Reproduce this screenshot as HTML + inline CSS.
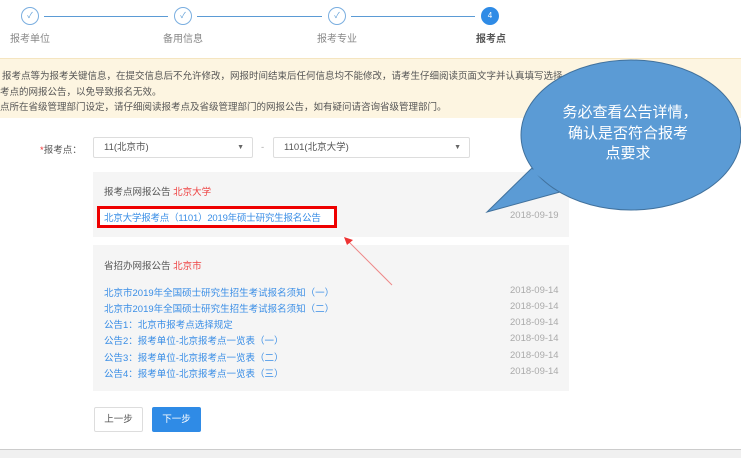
<!DOCTYPE html>
<html><head><meta charset="utf-8"><style>
*{margin:0;padding:0;box-sizing:border-box}
body{width:741px;height:458px;overflow:hidden;background:#fff;font-family:"Liberation Sans","Noto Sans CJK SC",sans-serif;font-size:9.5px;color:#555;position:relative}
.a{position:absolute;white-space:nowrap}
.c{position:absolute;width:18px;height:18px;border-radius:50%;border:1px solid #7aaee0;background:#fff;color:#5b9bd5;font-size:8px;text-align:center;line-height:16px}
.ln{position:absolute;height:1px;background:#5b9bd5;top:16px}
.lbl{position:absolute;top:30px;font-size:10px;color:#888}
.bx{position:absolute;background:#f5f5f5}
.lk{color:#3a8ee6}
.dt{position:absolute;left:510px;color:#aaa}
.sel{position:absolute;top:137px;height:21px;border:1px solid #ddd;border-radius:2px;padding-left:10px;line-height:19px;color:#555}
.sel i{position:absolute;right:8px;font-style:normal;font-size:7px;color:#666}
</style></head><body>
<div class="c" style="left:21px;top:7px">✓</div>
<div class="c" style="left:174px;top:7px">✓</div>
<div class="c" style="left:328px;top:7px">✓</div>
<div class="c" style="left:481px;top:7px;background:#2f8be6;border-color:#2f8be6;color:#fff">4</div>
<div class="ln" style="left:44px;width:124px"></div>
<div class="ln" style="left:197px;width:125px"></div>
<div class="ln" style="left:351px;width:124px"></div>
<div class="lbl" style="left:10px">报考单位</div>
<div class="lbl" style="left:163px">备用信息</div>
<div class="lbl" style="left:317px">报考专业</div>
<div class="lbl" style="left:476px;color:#555;font-weight:bold">报考点</div>
<div class="a" style="left:0;top:58px;width:741px;height:60px;background:#fdf5e1;border-top:1px solid #f5e5c0"></div>
<div class="a" style="left:2px;top:68px">报考点等为报考关键信息，在提交信息后不允许修改，网报时间结束后任何信息均不能修改，请考生仔细阅读页面文字并认真填写选择</div>
<div class="a" style="left:0;top:84px">考点的网报公告，以免导致报名无效。</div>
<div class="a" style="left:0;top:99px">点所在省级管理部门设定，请仔细阅读报考点及省级管理部门的网报公告，如有疑问请咨询省级管理部门。</div>
<div class="a" style="left:40px;top:142px"><span style="color:#e33">*</span>报考点：</div>
<div class="sel" style="left:93px;width:160px">11(北京市)<i style="top:0">▼</i></div>
<div class="a" style="left:261px;top:142px;color:#aaa">-</div>
<div class="sel" style="left:273px;width:197px">1101(北京大学)<i>▼</i></div>
<div class="bx" style="left:93px;top:172px;width:476px;height:65px"></div>
<div class="a" style="left:104px;top:184px">报考点网报公告 <span style="color:#e44">北京大学</span></div>
<div class="a" style="left:97px;top:206px;width:240px;height:22px;border:3px solid #e00;background:#fff"></div>
<div class="a lk" style="left:104px;top:210px;letter-spacing:-0.2px">北京大学报考点（1101）2019年硕士研究生报名公告</div>
<div class="dt" style="top:210px">2018-09-19</div>
<div class="bx" style="left:93px;top:245px;width:476px;height:146px"></div>
<div class="a" style="left:104px;top:258px">省招办网报公告 <span style="color:#e44">北京市</span></div>
<div class="a lk" style="left:104px;top:285px">北京市2019年全国硕士研究生招生考试报名须知（一）</div><div class="dt" style="top:285px">2018-09-14</div>
<div class="a lk" style="left:104px;top:301px">北京市2019年全国硕士研究生招生考试报名须知（二）</div><div class="dt" style="top:301px">2018-09-14</div>
<div class="a lk" style="left:104px;top:317px">公告1：北京市报考点选择规定</div><div class="dt" style="top:317px">2018-09-14</div>
<div class="a lk" style="left:104px;top:333px">公告2：报考单位-北京报考点一览表（一）</div><div class="dt" style="top:333px">2018-09-14</div>
<div class="a lk" style="left:104px;top:350px">公告3：报考单位-北京报考点一览表（二）</div><div class="dt" style="top:350px">2018-09-14</div>
<div class="a lk" style="left:104px;top:366px">公告4：报考单位-北京报考点一览表（三）</div><div class="dt" style="top:366px">2018-09-14</div>
<div class="a" style="left:94px;top:407px;width:49px;height:25px;border:1px solid #ddd;border-radius:2px;text-align:center;line-height:23px">上一步</div>
<div class="a" style="left:152px;top:407px;width:49px;height:25px;background:#2f8be6;border-radius:2px;text-align:center;line-height:25px;color:#fff">下一步</div>
<div class="a" style="left:0;top:449px;width:741px;height:9px;background:#f0f0f0;border-top:1px solid #ccc"></div>
<svg class="a" style="left:0;top:0" width="741" height="458">
<line x1="392" y1="285" x2="348" y2="241" stroke="#e88" stroke-width="1"/>
<polygon points="344,237 353,240 347,245" fill="#e33"/>
<path d="M532,168 L487,212 L560,192 Z" fill="#5b9bd5" stroke="#41719c" stroke-width="1"/>
<ellipse cx="631" cy="135" rx="110" ry="75" fill="#5b9bd5" stroke="#41719c" stroke-width="1"/>
<path d="M533,170 L560,190" stroke="#5b9bd5" stroke-width="3"/>
<text x="630" y="117" font-size="15" fill="#fff" text-anchor="middle" font-family="Liberation Sans,Noto Sans CJK SC,sans-serif">务必查看公告详情，</text>
<text x="628" y="138" font-size="15" fill="#fff" text-anchor="middle" font-family="Liberation Sans,Noto Sans CJK SC,sans-serif">确认是否符合报考</text>
<text x="628" y="158" font-size="15" fill="#fff" text-anchor="middle" font-family="Liberation Sans,Noto Sans CJK SC,sans-serif">点要求</text>
</svg>
</body></html>
